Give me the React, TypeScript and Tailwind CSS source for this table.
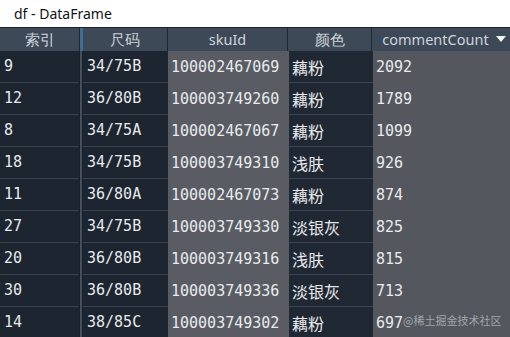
import React from 'react';

const ROWS = [
  { idx: '9', size: '34/75B', sku: '100002467069', color: '藕粉', count: '2092' },
  { idx: '12', size: '36/80B', sku: '100003749260', color: '藕粉', count: '1789' },
  { idx: '8', size: '34/75A', sku: '100002467067', color: '藕粉', count: '1099' },
  { idx: '18', size: '34/75B', sku: '100003749310', color: '浅肤', count: '926' },
  { idx: '11', size: '36/80A', sku: '100002467073', color: '藕粉', count: '874' },
  { idx: '27', size: '34/75B', sku: '100003749330', color: '淡银灰', count: '825' },
  { idx: '20', size: '36/80B', sku: '100003749316', color: '浅肤', count: '815' },
  { idx: '30', size: '36/80B', sku: '100003749336', color: '淡银灰', count: '713' },
  { idx: '14', size: '38/85C', sku: '100003749302', color: '藕粉', count: '697' },
];

const mono = "font-['DejaVu_Sans_Mono','Liberation_Mono',monospace] text-[15px]";
const cjk = "font-['Noto_Sans_CJK_SC',sans-serif] text-[16px]";

export default function App() {
  return (
    <div className="relative w-[510px] h-[337px] overflow-hidden bg-[#575b61] font-['Noto_Sans',sans-serif]">
      {/* Title bar */}
      <div className="h-[27px] bg-white flex items-center pl-[14px] text-[14px] text-[#111]">
        df - DataFrame
      </div>

      {/* Header */}
      <div className="flex h-[24px] border-t border-[#1c232c] bg-[#3e4957] text-[14.5px] text-[#cdd4db]">
        <div className="w-[80px] flex items-center justify-center border-r border-[#1f2731]">索引</div>
        <div className="w-[3px] bg-[#3f6d96]" />
        <div className="w-[85px] flex items-center justify-center border-r border-[#1f2731]">尺码</div>
        <div className="w-[120px] flex items-center justify-center border-r border-[#1f2731]">skuId</div>
        <div className="w-[84px] flex items-center justify-center border-r border-[#1f2731]">颜色</div>
        <div className="flex-1 flex items-center justify-center gap-[7px] pl-[6px]">
          <span>commentCount</span>
          <svg width="10" height="7" viewBox="0 0 10 7"><path d="M0 0H10L5 6Z" fill="#f2f4f6" /></svg>
        </div>
      </div>

      {/* Body */}
      {ROWS.map((r) => (
        <div key={r.idx + r.sku} className="flex h-[32px] text-[#e8eaec]">
          <div className={`w-[79px] flex items-center pl-[4px] bg-[#1d2530] border-b border-[#3a434e] ${mono}`}>{r.idx}</div>
          <div className="w-[4px] bg-[#46505b] border-x border-[#1a212a]" />
          <div className={`w-[85px] flex items-center pl-[4px] bg-[#1d2530] border-b border-[#3a434e] ${mono}`}>{r.size}</div>
          <div className={`w-[121px] flex items-center pl-[3px] bg-[#595d63] ${mono}`}>{r.sku}</div>
          <div className={`w-[84px] flex items-center pl-[3px] bg-[#202833] border-b border-[#3a434e] ${cjk}`}>{r.color}</div>
          <div className={`flex-1 flex items-center pl-[3px] bg-[#54585e] ${mono}`}>{r.count}</div>
        </div>
      ))}

      {/* Watermark */}
      <div className="absolute left-[403px] top-[312px] whitespace-nowrap text-[11px] text-[#b8bcc0]/80 font-['Noto_Sans_CJK_SC',sans-serif]">
        @稀土掘金技术社区
      </div>
    </div>
  );
}
